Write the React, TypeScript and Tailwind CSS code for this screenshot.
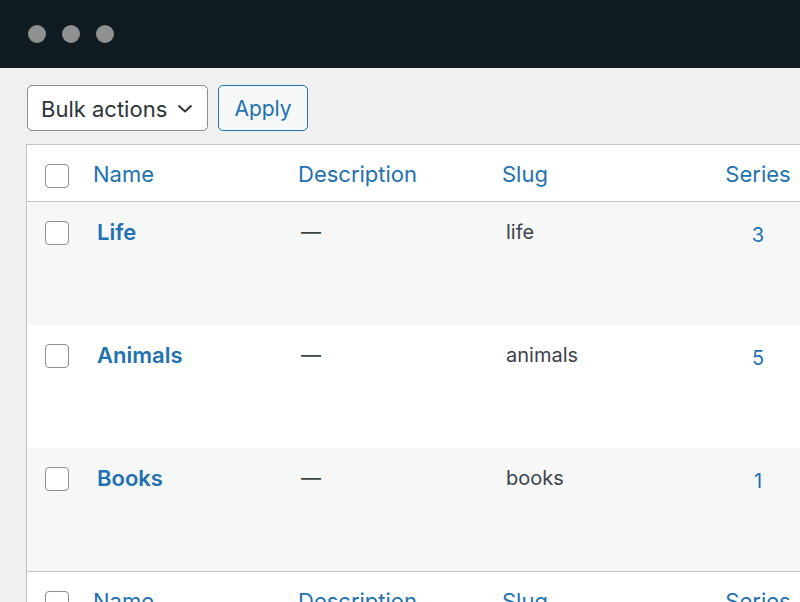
import React from 'react';

const font = { fontFamily: 'Inter, "Liberation Sans", sans-serif' };

const rows = [
  { name: 'Life', slug: 'life', count: 3, bg: 'bg-[#f6f7f7]' },
  { name: 'Animals', slug: 'animals', count: 5, bg: 'bg-white' },
  { name: 'Books', slug: 'books', count: 1, bg: 'bg-[#f6f7f7]' },
];

function Checkbox() {
  return <div className="w-[24px] h-[24px] rounded-[4px] border border-[#8c8f94] bg-white" />;
}

function HeaderRow({ top }: { top?: boolean }) {
  return (
    <div
      className={`flex items-start h-[57px] bg-white text-[22px] leading-[28px] text-[#2271b1] ${
        top ? 'border-b' : 'border-t'
      } border-[#c3c4c7]`}
    >
      <div className="w-[66px] pl-[18px] pt-[19px] shrink-0">
        <Checkbox />
      </div>
      <div className="w-[205px] pt-[15px] shrink-0">Name</div>
      <div className="w-[204px] pt-[15px] shrink-0">Description</div>
      <div className="w-[192px] pt-[15px] shrink-0">Slug</div>
      <div className="w-[128px] pt-[15px] shrink-0 text-center">Series</div>
    </div>
  );
}

export default function App() {
  return (
    <div className="w-[800px] h-[602px] overflow-hidden bg-[#f0f0f1]" style={font}>
      {/* window bar */}
      <div className="h-[68px] bg-[#101a21] flex items-center pl-[28px] gap-[16px]">
        <div className="w-[18px] h-[18px] rounded-full bg-[#8f9091]" />
        <div className="w-[18px] h-[18px] rounded-full bg-[#8f9091]" />
        <div className="w-[18px] h-[18px] rounded-full bg-[#8f9091]" />
      </div>

      {/* toolbar */}
      <div className="flex gap-[10px] pt-[17px] pl-[27px]">
        <div className="w-[181px] h-[46px] rounded-[5px] border border-[#8c8f94] bg-white flex items-center pl-[13px] pr-[14px] justify-between text-[22px] text-[#2c3338]">
          <span className="pt-[2px]">Bulk actions</span>
          <svg width="16" height="9" viewBox="0 0 16 9" fill="none">
            <polyline points="1.5,1.5 8,7.5 14.5,1.5" stroke="#2c3338" strokeWidth="2" />
          </svg>
        </div>
        <div className="w-[90px] h-[46px] rounded-[5px] border border-[#2271b1] bg-[#f6f7f7] flex items-center justify-center pt-[2px] text-[21px] text-[#2271b1]">
          Apply
        </div>
      </div>

      {/* table */}
      <div className="mt-[13px] ml-[26px] w-[820px] border-l border-t border-[#c3c4c7]">
        <HeaderRow top />
        {rows.map((r) => (
          <div key={r.name} className={`flex items-start h-[123px] ${r.bg}`}>
            <div className="w-[66px] pl-[18px] pt-[19px] shrink-0">
              <Checkbox />
            </div>
            <div className="w-[205px] pl-[4px] pt-[16px] shrink-0 text-[22px] leading-[28px] font-semibold text-[#2271b1]">
              {r.name}
            </div>
            <div className="w-[204px] pl-[3px] pt-[16px] shrink-0 text-[20px] leading-[28px] text-[#3c434a]">
              —
            </div>
            <div className="w-[192px] pl-[4px] pt-[16px] shrink-0 text-[20px] leading-[28px] text-[#3c434a]">
              {r.slug}
            </div>
            <div className="w-[128px] pt-[19px] shrink-0 text-center text-[20px] leading-[28px] text-[#2271b1]">
              {r.count}
            </div>
          </div>
        ))}
        <HeaderRow />
      </div>
    </div>
  );
}
